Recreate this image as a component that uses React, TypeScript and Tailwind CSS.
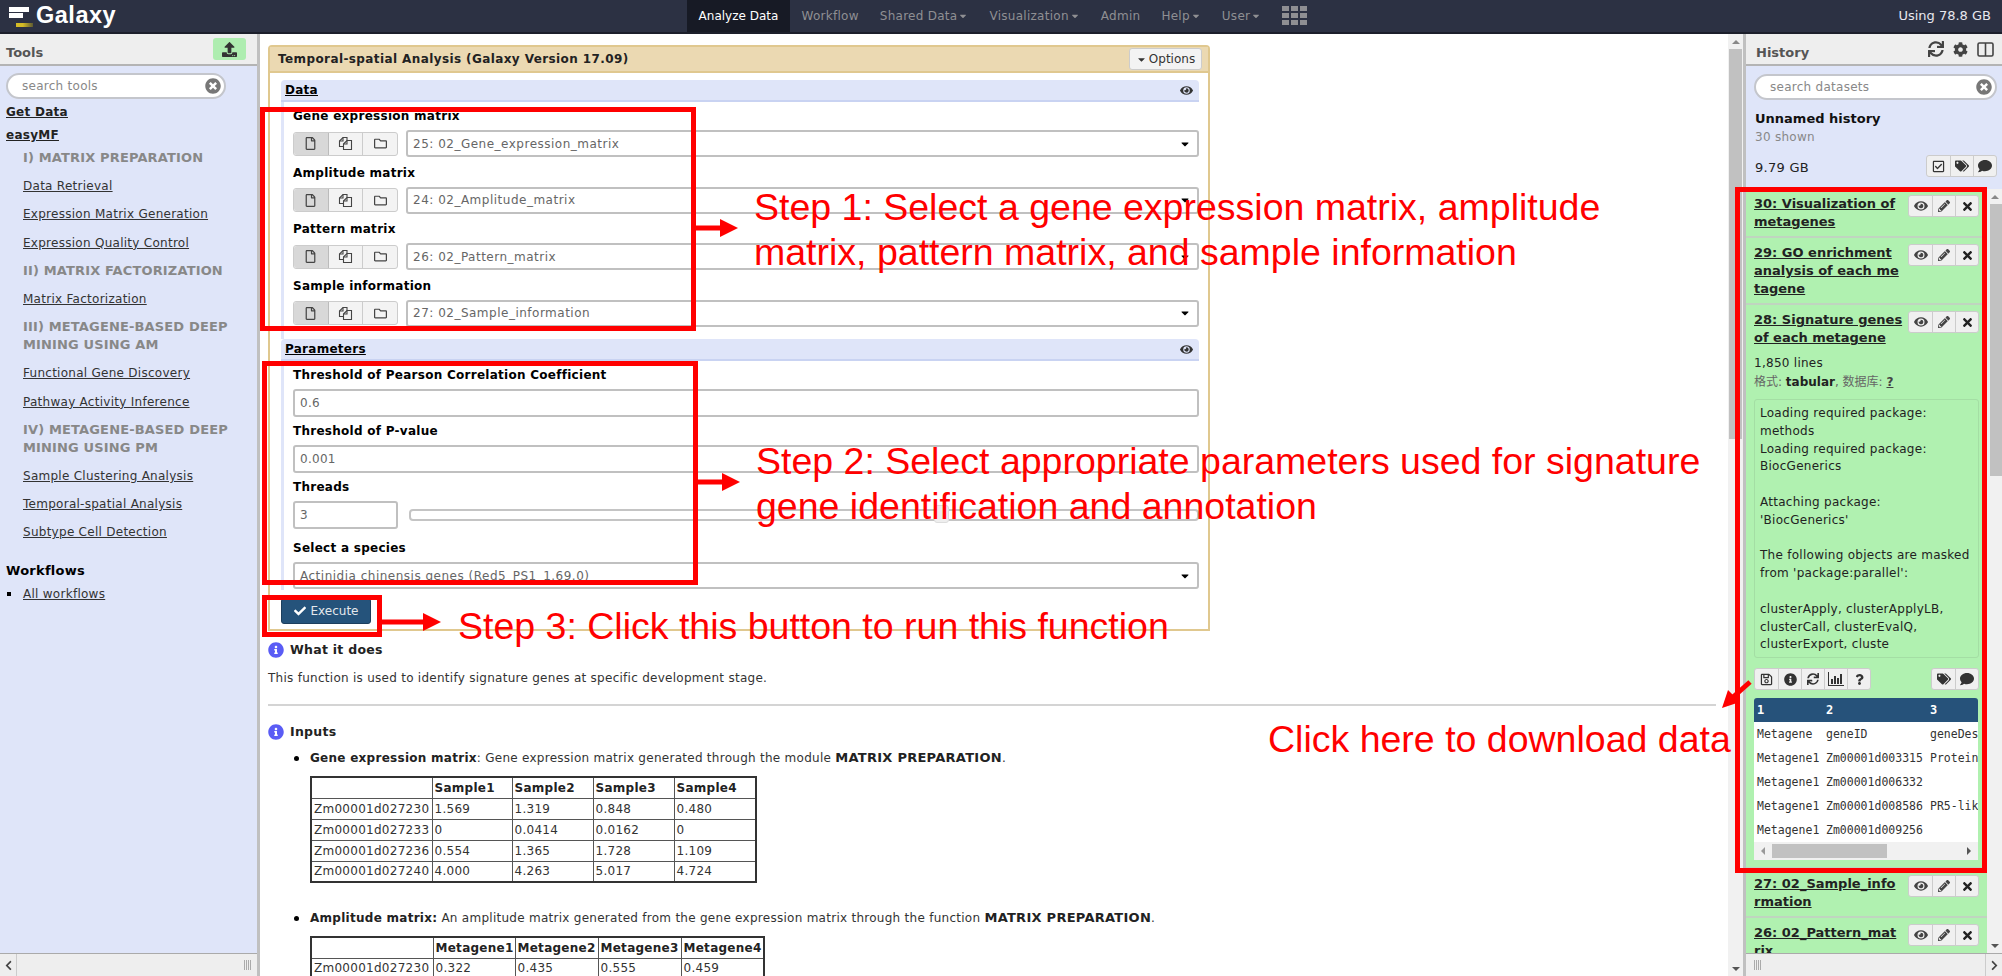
import type { ReactNode } from "react";
import {
  FaCaretDown,
  FaCheck,
  FaChevronLeft,
  FaChevronRight,
  FaCog,
  FaComment,
  FaEye,
  FaInfoCircle,
  FaPencilAlt,
  FaQuestion,
  FaRegCheckSquare,
  FaRegFile,
  FaRegFolder,
  FaRegSave,
  FaSync,
  FaTags,
  FaTimes,
  FaTimesCircle,
  FaUpload,
} from "react-icons/fa";

const NAV = [
  { label: "Workflow", caret: false },
  { label: "Shared Data", caret: true },
  { label: "Visualization", caret: true },
  { label: "Admin", caret: false },
  { label: "Help", caret: true },
  { label: "User", caret: true },
];

function Logo() {
  return (
    <div className="flex items-center h-full pl-[9px] gap-[3px]">
      <svg width="24" height="22" viewBox="0 0 24 22">
        <defs>
          <linearGradient id="logoFade" x1="0" x2="1" y1="0" y2="0">
            <stop offset="0.4" stopColor="#d4bb26" />
            <stop offset="1" stopColor="#5d5a33" />
          </linearGradient>
        </defs>
        <rect x="0" y="2" width="20" height="5" fill="#fff" />
        <rect x="0" y="8" width="14" height="5" fill="#fff" />
        <rect x="7" y="18" width="17" height="4" fill="url(#logoFade)" />
      </svg>
      <span className="font-['Liberation_Sans'] font-bold text-[23.5px] text-white tracking-[0.5px]">Galaxy</span>
    </div>
  );
}

function Masthead() {
  return (
    <div className="relative flex items-center h-[34px] shrink-0 bg-[#2c3143] border-b-2 border-[#1c1f2b] text-[12px]">
      <div className="w-[687px] h-full"><Logo /></div>
      <div className="flex items-center h-full">
        <div className="flex items-center h-full px-[10px] w-[103px] bg-[#171a25] text-white justify-center tracking-normal">Analyze Data</div>
        <div className="flex items-center h-full pl-[1px]">
          {NAV.map((item) => (
            <div key={item.label} className="flex items-center h-full px-[10.5px] text-[#8f8f93]">
              {item.label}
              {item.caret && <FaCaretDown className="text-[10px] ml-[1px]" />}
            </div>
          ))}
          <svg className="ml-[10px]" width="25" height="20" viewBox="0 0 25 20" fill="#8f8f93">
            <rect x="0" y="0" width="7" height="5" />
            <rect x="9" y="0" width="7" height="5" />
            <rect x="18" y="0" width="7" height="5" />
            <rect x="0" y="7" width="7" height="5" />
            <rect x="9" y="7" width="7" height="5" />
            <rect x="18" y="7" width="7" height="5" />
            <rect x="0" y="14" width="7" height="5" />
            <rect x="9" y="14" width="7" height="5" />
            <rect x="18" y="14" width="7" height="5" />
          </svg>
        </div>
      </div>
      <div className="ml-auto pr-[11px] text-[#e8e8ee] text-[13px] tracking-normal">Using 78.8 GB</div>
    </div>
  );
}

function PanelHead({ title, inset, children }: { title: string; inset: string; children?: ReactNode }) {
  return (
    <div className="flex items-center justify-between h-[32px] shrink-0 bg-[#eeeeee] border-b-2 border-[#b4b4b4] text-[13px] font-bold text-[#555] tracking-normal">
      <span className={`pt-[8px] ${inset}`}>{title}</span>
      {children}
    </div>
  );
}

function SearchBox({ placeholder, className }: { placeholder: string; className: string }) {
  return (
    <div className={`flex items-center justify-between h-[26px] rounded-full bg-white border-2 border-[#c4c6cc] pl-[14px] pr-[3px] text-[12px] text-[#888] ${className}`}>
      <span>{placeholder}</span>
      <FaTimesCircle className="text-[16px] text-[#777]" />
    </div>
  );
}

const TOOLS: { kind: "h" | "a"; text: ReactNode }[] = [
  { kind: "h", text: "I) MATRIX PREPARATION" },
  { kind: "a", text: "Data Retrieval" },
  { kind: "a", text: "Expression Matrix Generation" },
  { kind: "a", text: "Expression Quality Control" },
  { kind: "h", text: "II) MATRIX FACTORIZATION" },
  { kind: "a", text: "Matrix Factorization" },
  { kind: "h", text: <>III) METAGENE-BASED DEEP<br />MINING USING AM</> },
  { kind: "a", text: "Functional Gene Discovery" },
  { kind: "a", text: "Pathway Activity Inference" },
  { kind: "h", text: <>IV) METAGENE-BASED DEEP<br />MINING USING PM</> },
  { kind: "a", text: "Sample Clustering Analysis" },
  { kind: "a", text: "Temporal-spatial Analysis" },
  { kind: "a", text: "Subtype Cell Detection" },
];

function Tools() {
  return (
    <aside className="flex flex-col w-[260px] shrink-0 bg-[#dfe5f9] border-r-[3px] border-[#c0c0c0]">
      <PanelHead title="Tools" inset="pl-[6px]">
        <div className="flex items-center justify-center w-[33px] h-[22px] mr-[11px] rounded-[3px] bg-[#aeedb0] text-[#333]">
          <FaUpload className="text-[15px]" />
        </div>
      </PanelHead>
      <div className="flex-1 text-[12px] leading-[18px] overflow-hidden">
        <SearchBox placeholder="search tools" className="mt-[7px] ml-[6px] w-[220px]" />
        <div className="mt-[4px] pl-[6px] font-bold underline text-[#222]">Get Data</div>
        <div className="mt-[5px] pl-[6px] font-bold underline text-[#222]">easyMF</div>
        <div className="pl-[23px]">
          {TOOLS.map((t, i) =>
            t.kind === "h" ? (
              <div key={i} className="py-[5.1px] font-bold text-[#888] text-[13px] leading-[18px] tracking-[0.15px]">{t.text}</div>
            ) : (
              <div key={i} className="py-[5.1px] underline text-[#333]">{t.text}</div>
            )
          )}
        </div>
        <div className="mt-[16px] pl-[6px] font-bold text-[13px] text-black">Workflows</div>
        <div className="flex items-center mt-[5px] pl-[7px]">
          <span className="w-[4px] h-[4px] bg-black mr-[12px]" />
          <span className="underline text-[#333]">All workflows</span>
        </div>
      </div>
      <div className="flex items-center justify-between h-[23px] shrink-0 bg-[#eeeeee] border-t border-[#aaa]">
        <div className="flex items-center justify-center w-[17px] h-full border-r border-[#ccc] text-[#444]">
          <FaChevronLeft className="text-[11px]" />
        </div>
        <Grip className="mr-[6px]" />
      </div>
    </aside>
  );
}

function Grip({ className }: { className: string }) {
  return (
    <div className={`flex gap-[1px] h-[10px] ${className}`}>
      <span className="w-[1px] bg-[#aaa]" />
      <span className="w-[1px] bg-[#aaa]" />
      <span className="w-[1px] bg-[#aaa]" />
      <span className="w-[1px] bg-[#aaa]" />
    </div>
  );
}

function FilesIcon() {
  return (
    <svg width="15" height="15" viewBox="0 0 15 15" fill="none" stroke="currentColor" strokeWidth="1.1">
      <path d="M5.5 10.5H1.5V5L5 1.5H9V4.5" />
      <path d="M5 1.5V5H1.5" />
      <path d="M5.5 8L9 4.5H13.5V13.5H5.5Z" />
      <path d="M9 4.5V8H5.5" />
    </svg>
  );
}

function BarsIcon() {
  return (
    <svg width="16" height="14" viewBox="0 0 16 14" fill="currentColor">
      <rect x="0" y="0" width="1" height="14" />
      <rect x="0" y="13" width="16" height="1" />
      <rect x="3" y="7" width="2" height="5" />
      <rect x="6" y="4" width="2" height="8" />
      <rect x="9" y="6" width="2" height="6" />
      <rect x="12" y="2" width="2" height="10" />
    </svg>
  );
}

function SplitIcon() {
  return (
    <svg width="17" height="15" viewBox="0 0 17 15" fill="none" stroke="currentColor" strokeWidth="1.6">
      <rect x="1" y="1" width="15" height="13" rx="1.5" />
      <line x1="8.5" y1="1" x2="8.5" y2="14" />
    </svg>
  );
}

function SectionHead({ title }: { title: string }) {
  return (
    <div className="flex items-center justify-between h-[22px] pl-[4px] pr-[6px] rounded-t-[4px] bg-[#dfe5f9] border-b-2 border-[#c9d3f2] font-bold text-black">
      <span className="underline">{title}</span>
      <FaEye className="text-[13px] text-[#333]" />
    </div>
  );
}

function SelectBox({ value, className }: { value: string; className?: string }) {
  return (
    <div className={`flex items-center justify-between h-[27px] bg-white border-2 border-[#c0c0c0] rounded-[3px] pl-[5px] pr-[6px] text-[#666] tracking-[0.5px] ${className ?? ""}`}>
      <span>{value}</span>
      <FaCaretDown className="text-[12px] text-black" />
    </div>
  );
}

function DataRow({ label, value }: { label: string; value: string }) {
  return (
    <div className="mb-[6.5px]">
      <div className="h-[18px] mb-[5px] font-bold text-black">{label}</div>
      <div className="flex items-center gap-[8px]">
        <div className="flex h-[24px] w-[105px] shrink-0 rounded-[3px] border border-[#ccc] bg-[#f3f3f3] text-[#444]">
          <div className="flex flex-1 items-center justify-center bg-[#d8d8d8] border-r border-[#bbb] rounded-l-[3px]"><FaRegFile className="text-[13px]" /></div>
          <div className="flex flex-1 items-center justify-center border-r border-[#ccc]"><FilesIcon /></div>
          <div className="flex flex-1 items-center justify-center"><FaRegFolder className="text-[13px]" /></div>
        </div>
        <SelectBox value={value} className="flex-1" />
      </div>
    </div>
  );
}

function TextField({ label, value }: { label: string; value: string }) {
  return (
    <div className="mb-[5px]">
      <div className="h-[18px] mb-[5px] font-bold text-black">{label}</div>
      <div className="flex items-center h-[28px] bg-white border-2 border-[#c0c0c0] rounded-[3px] pl-[5px] text-[#666]">{value}</div>
    </div>
  );
}

function ToolForm() {
  return (
    <div className="w-[942px] h-[586px] shrink-0 rounded-t-[4px] border-x-2 border-b-2 border-t-2 border-[#e0c88f] text-[12px] leading-[18px]">
      <div className="flex items-center justify-between h-[26px] bg-[#ebd9b2] border-b-2 border-[#e0c88f] pl-[8px] pr-[6px]">
        <span className="font-bold text-[12px] tracking-[0.4px] text-[#222]">Temporal-spatial Analysis (Galaxy Version 17.09)</span>
        <div className="flex items-center h-[22px] w-[73px] justify-center gap-[2px] rounded-[3px] border border-[#ccc] bg-[#f3f3f3] text-[#333] tracking-normal">
          <FaCaretDown className="text-[11px]" />
          Options
        </div>
      </div>
      <div className="pl-[11px] pr-[9px] pt-[7px]">
        <SectionHead title="Data" />
        <div className="border-l-[3px] border-[#dfe5f9] pl-[9px] pt-[5px] h-[237px]">
          <DataRow label="Gene expression matrix" value="25: 02_Gene_expression_matrix" />
          <DataRow label="Amplitude matrix" value="24: 02_Amplitude_matrix" />
          <DataRow label="Pattern matrix" value="26: 02_Pattern_matrix" />
          <DataRow label="Sample information" value="27: 02_Sample_information" />
        </div>
        <SectionHead title="Parameters" />
        <div className="border-l-[3px] border-[#dfe5f9] pl-[9px] pt-[5px] h-[229px]">
          <TextField label="Threshold of Pearson Correlation Coefficient" value="0.6" />
          <TextField label="Threshold of P-value" value="0.001" />
          <div className="h-[18px] mb-[5px] font-bold text-black">Threads</div>
          <div className="flex items-center gap-[11px]">
            <div className="flex items-center h-[28px] w-[105px] shrink-0 bg-white border-2 border-[#c0c0c0] rounded-[3px] pl-[5px] text-[#666]">3</div>
            <div className="relative flex-1 h-[12px] bg-white border-2 border-[#c4c4c4] rounded-[4px]">
              <div className="absolute left-[523px] top-[-6px] w-[15px] h-[18px] bg-[#eeeeee] border border-[#ddd] rounded-[3px]" />
            </div>
          </div>
          <div className="h-[18px] mt-[10px] mb-[5px] font-bold text-black">Select a species</div>
          <SelectBox value="Actinidia chinensis genes (Red5_PS1_1.69.0)" />
        </div>
        <div className="flex items-center justify-center gap-[5px] w-[90px] h-[26px] mt-[8px] rounded-[3px] bg-[#25537b] border border-[#1d3f5e] text-[#e4e8ec] tracking-normal">
          <FaCheck className="text-[12px] text-white" />
          Execute
        </div>
      </div>
    </div>
  );
}

function InfoHead({ title }: { title: string }) {
  return (
    <div className="flex items-center gap-[6px] h-[18px] font-bold text-[12.5px] text-[#222]">
      <FaInfoCircle className="text-[16px] text-[#5a5cf5]" />
      {title}
    </div>
  );
}

function DataTable({ cols, head, rows }: { cols: number[]; head: string[]; rows: string[][] }) {
  return (
    <table className="border-collapse table-fixed border-2 border-[#333] ml-[42px] text-[#333]" style={{ width: cols.reduce((a, b) => a + b, 0) }}>
      <colgroup>
        {cols.map((w, i) => (
          <col key={i} style={{ width: w }} />
        ))}
      </colgroup>
      <tbody>
        <tr className="h-[21px]">
          <th className="border border-[#555]" />
          {head.map((h) => (
            <th key={h} className="border border-[#555] px-[2px] text-left font-bold text-[#222]">{h}</th>
          ))}
        </tr>
        {rows.map((r) => (
          <tr key={r[0]} className="h-[21px]">
            {r.map((c, i) => (
              <td key={i} className="border border-[#555] px-[2px]">{c}</td>
            ))}
          </tr>
        ))}
      </tbody>
    </table>
  );
}

function Help() {
  return (
    <div className="text-[12px] leading-[18px] text-[#333]">
      <div className="mt-[10px]"><InfoHead title="What it does" /></div>
      <div className="mt-[10px]">This function is used to identify signature genes at specific development stage.</div>
      <div className="mt-[17px] h-[2px] w-[1448px] bg-[#d4d4d4]" />
      <div className="mt-[17px]"><InfoHead title="Inputs" /></div>
      <div className="flex items-center mt-[8px] h-[18px] pl-[26px]">
        <span className="w-[5px] h-[5px] rounded-full bg-black mr-[11px]" />
        <span><b className="text-[#222]">Gene expression matrix</b>: Gene expression matrix generated through the module <b className="text-[#222] text-[13px]">MATRIX PREPARATION</b>.</span>
      </div>
      <div className="mt-[9px]">
        <DataTable
          cols={[121, 80, 81, 81, 82]}
          head={["Sample1", "Sample2", "Sample3", "Sample4"]}
          rows={[
            ["Zm00001d027230", "1.569", "1.319", "0.848", "0.480"],
            ["Zm00001d027233", "0", "0.0414", "0.0162", "0"],
            ["Zm00001d027236", "0.554", "1.365", "1.728", "1.109"],
            ["Zm00001d027240", "4.000", "4.263", "5.017", "4.724"],
          ]}
        />
      </div>
      <div className="flex items-center mt-[26px] h-[18px] pl-[26px]">
        <span className="w-[5px] h-[5px] rounded-full bg-black mr-[11px]" />
        <span><b className="text-[#222]">Amplitude matrix:</b> An amplitude matrix generated from the gene expression matrix through the function <b className="text-[#222] text-[13px]">MATRIX PREPARATION</b>.</span>
      </div>
      <div className="mt-[9px]">
        <DataTable
          cols={[122, 82, 83, 83, 83]}
          head={["Metagene1", "Metagene2", "Metagene3", "Metagene4"]}
          rows={[["Zm00001d027230", "0.322", "0.435", "0.555", "0.459"]]}
        />
      </div>
    </div>
  );
}

function ScrollArrow({ up, className }: { up: boolean; className?: string }) {
  return (
    <div className={`flex items-center justify-center h-[15px] shrink-0 ${className ?? ""}`}>
      <div className={up ? "w-0 h-0 border-x-[4px] border-x-transparent border-b-[4px] border-b-[#888]" : "w-0 h-0 border-x-[4px] border-x-transparent border-t-[4px] border-t-[#555]"} />
    </div>
  );
}

function CenterScrollbar() {
  return (
    <div className="flex flex-col w-[15px] shrink-0 bg-[#f1f1f1]">
      <ScrollArrow up={true} />
      <div className="h-[390px] mx-[1px] bg-[#c1c1c1]" />
      <div className="flex-1" />
      <ScrollArrow up={false} />
    </div>
  );
}

function IconGroup({ icons, className }: { icons: ReactNode[]; className?: string }) {
  return (
    <div className={`flex h-[22px] rounded-[3px] border border-[#ccc] bg-[#f0f0f0] text-[#333] ${className ?? ""}`}>
      {icons.map((ic, i) => (
        <div key={i} className={`flex items-center justify-center w-[23px] ${i > 0 ? "border-l border-[#ccc]" : ""}`}>{ic}</div>
      ))}
    </div>
  );
}

const itemIcons = [
  <FaEye className="text-[14px] text-[#444]" />,
  <FaPencilAlt className="text-[12px] text-[#444]" />,
  <FaTimes className="text-[13px] text-[#222]" />,
];

function HistoryItem({ title }: { title: ReactNode }) {
  return (
    <div className="relative pl-[8px] pr-[8px] pt-[6px] pb-[5px] bg-[#b0f1b0] border-b-2 border-[#c0d4c0]">
      <div className="font-bold text-[13px] underline text-[#222] w-[150px] tracking-normal">{title}</div>
      <IconGroup icons={itemIcons} className="absolute right-[8px] top-[6px]" />
    </div>
  );
}

const PEEK = [
  ["Metagene", "geneID", "geneDes"],
  ["Metagene1", "Zm00001d003315", "Protein"],
  ["Metagene1", "Zm00001d006332", ""],
  ["Metagene1", "Zm00001d008586", "PR5-lik"],
  ["Metagene1", "Zm00001d009256", ""],
];

function ExpandedItem() {
  return (
    <div className="relative pl-[8px] pr-[8px] pt-[6px] pb-[7px] bg-[#b0f1b0] border-b-2 border-[#c0d4c0]">
      <div className="font-bold text-[13px] underline text-[#222] tracking-normal">28: Signature genes<br />of each metagene</div>
      <IconGroup icons={itemIcons} className="absolute right-[8px] top-[6px]" />
      <div className="mt-[7px] text-[#222]">1,850 lines</div>
      <div className="mt-[1px] text-[#666] font-['DejaVu_Sans','Noto_Sans_CJK_SC',sans-serif] tracking-normal">
        格式: <b className="text-[#222]">tabular</b>, 数据库: <b className="underline text-[#444]">?</b>
      </div>
      <div className="mt-[8px] h-[259px] px-[5px] py-[5px] rounded-[3px] border border-[#a4dea4] text-[#222] leading-[17.8px]">
        Loading required package:<br />methods<br />Loading required package:<br />BiocGenerics<br /><br />Attaching package:<br />'BiocGenerics'<br /><br />The following objects are masked<br />from 'package:parallel':<br /><br />clusterApply, clusterApplyLB,<br />clusterCall, clusterEvalQ,<br />clusterExport, cluste
      </div>
      <div className="flex justify-between mt-[10px]">
        <IconGroup
          icons={[
            <FaRegSave className="text-[13px]" />,
            <FaInfoCircle className="text-[13px]" />,
            <FaSync className="text-[12px]" />,
            <BarsIcon />,
            <FaQuestion className="text-[11px]" />,
          ]}
        />
        <IconGroup icons={[<FaTags className="text-[14px]" />, <FaComment className="text-[14px]" />]} />
      </div>
      <div className="mt-[8px] w-[224px] overflow-hidden">
        <div className="flex items-center h-[24px] rounded-t-[3px] bg-[#26527a] text-white font-bold font-['DejaVu_Sans_Mono',monospace] tracking-normal">
          <span className="w-[69px] pl-[3px]">1</span>
          <span className="w-[104px] pl-[3px]">2</span>
          <span className="pl-[3px]">3</span>
        </div>
        <div className="bg-white font-['DejaVu_Sans_Mono',monospace] text-[11.5px] text-[#333] overflow-hidden tracking-normal">
          {PEEK.map((r, i) => (
            <div key={i} className="flex items-center h-[24px] whitespace-nowrap">
              <span className="w-[69px] shrink-0 pl-[3px]">{r[0]}</span>
              <span className="w-[104px] shrink-0 pl-[3px]">{r[1]}</span>
              <span className="pl-[3px]">{r[2]}</span>
            </div>
          ))}
        </div>
        <div className="flex items-center h-[18px] bg-[#f1f1f1]">
          <div className="flex items-center justify-center w-[18px] shrink-0">
            <div className="w-0 h-0 border-y-[4px] border-y-transparent border-r-[4px] border-r-[#999]" />
          </div>
          <div className="w-[115px] h-[14px] bg-[#c1c1c1]" />
          <div className="flex-1" />
          <div className="flex items-center justify-center w-[18px] shrink-0">
            <div className="w-0 h-0 border-y-[4px] border-y-transparent border-l-[4px] border-l-[#555]" />
          </div>
        </div>
      </div>
    </div>
  );
}

function History() {
  return (
    <aside className="flex flex-col w-[259px] shrink-0 border-l-[3px] border-[#c0c0c0] bg-[#dfe5f9] text-[12px] leading-[18px]">
      <PanelHead title="History" inset="pl-[10px]">
        <div className="flex items-center gap-[9px] pr-[8px] text-[#444]">
          <FaSync className="text-[16px]" />
          <FaCog className="text-[15px]" />
          <SplitIcon />
        </div>
      </PanelHead>
      <div className="h-[123px] shrink-0 pl-[8px]">
        <SearchBox placeholder="search datasets" className="mt-[8px] w-[243px]" />
        <div className="mt-[10px] pl-[1px] font-bold text-[13px] text-[#111] tracking-normal">Unnamed history</div>
        <div className="pl-[1px] text-[#888]">30 shown</div>
        <div className="flex items-center justify-between mt-[9px] pl-[1px] pr-[5px]">
          <span className="pt-[3px] text-[13px] text-[#222]">9.79 GB</span>
          <IconGroup
            icons={[
              <FaRegCheckSquare className="text-[13px]" />,
              <FaTags className="text-[14px]" />,
              <FaComment className="text-[14px]" />,
            ]}
          />
        </div>
      </div>
      <div className="flex flex-1 min-h-0 bg-[#f1f1f1]">
        <div className="flex-1 overflow-hidden bg-[#b0f1b0]">
          <HistoryItem title={<>30: Visualization of<br />metagenes</>} />
          <HistoryItem title={<>29: GO enrichment<br />analysis of each me<br />tagene</>} />
          <ExpandedItem />
          <HistoryItem title={<>27: 02_Sample_info<br />rmation</>} />
          <HistoryItem title={<>26: 02_Pattern_mat<br />rix</>} />
        </div>
        <div className="flex flex-col w-[15px] shrink-0 bg-[#f1f1f1]">
          <ScrollArrow up={true} />
          <div className="h-[272px] ml-[3px] bg-[#c1c1c1]" />
          <div className="flex-1" />
          <ScrollArrow up={false} />
        </div>
      </div>
      <div className="flex items-center justify-between h-[23px] shrink-0 bg-[#eeeeee] border-t border-[#aaa]">
        <Grip className="ml-[8px]" />
        <div className="flex items-center justify-center w-[17px] h-full border-l border-[#ccc] text-[#444]">
          <FaChevronRight className="text-[11px]" />
        </div>
      </div>
    </aside>
  );
}

function RedBox({ className }: { className: string }) {
  return <div className={`absolute border-[5px] border-[#ff0000] ${className}`} />;
}

function RedArrow({ length, className }: { length: number; className: string }) {
  return (
    <svg className={`absolute ${className}`} width={length} height="20" viewBox={`0 0 ${length} 20`}>
      <rect x="0" y="7.5" width={length - 16} height="5" fill="#ff0000" />
      <polygon points={`${length - 18},1 ${length},10 ${length - 18},19`} fill="#ff0000" />
    </svg>
  );
}

function Annotations() {
  const text = "absolute font-['Liberation_Sans'] text-[37.5px] leading-[44.5px] tracking-normal text-[#ff0000] whitespace-nowrap";
  return (
    <>
      <RedBox className="left-[260px] top-[107px] w-[436px] h-[224px]" />
      <RedBox className="left-[262px] top-[361px] w-[436px] h-[224px]" />
      <RedBox className="left-[262px] top-[595px] w-[120px] h-[42px]" />
      <RedBox className="left-[1735px] top-[187px] w-[252px] h-[686px]" />
      <RedArrow length={43} className="left-[695px] top-[218px]" />
      <RedArrow length={43} className="left-[697px] top-[472px]" />
      <RedArrow length={60} className="left-[381px] top-[612px]" />
      <svg className="absolute left-[1720px] top-[678px]" width="34" height="34" viewBox="0 0 34 34">
        <line x1="30" y1="4" x2="12" y2="20" stroke="#ff0000" strokeWidth="5" />
        <polygon points="2,30 8,12 20,24" fill="#ff0000" />
      </svg>
      <div className={`${text} left-[754px] top-[185px]`}>Step 1: Select a gene expression matrix, amplitude<br />matrix, pattern matrix, and sample information</div>
      <div className={`${text} left-[756px] top-[439px]`}>Step 2: Select appropriate parameters used for signature<br />gene identification and annotation</div>
      <div className={`${text} left-[458px] top-[604px]`}>Step 3: Click this button to run this function</div>
      <div className={`${text} left-[1268px] top-[717px]`}>Click here to download data</div>
    </>
  );
}

export default function App() {
  return (
    <div className="relative flex flex-col w-[2002px] h-[976px] overflow-hidden bg-white font-['DejaVu_Sans',sans-serif] tracking-[0.27px]">
      <Masthead />
      <div className="flex flex-1 min-h-0">
        <Tools />
        <main className="flex-1 min-w-0 overflow-hidden pl-[8px] pt-[11px]">
          <ToolForm />
          <Help />
        </main>
        <CenterScrollbar />
        <History />
      </div>
      <Annotations />
    </div>
  );
}
